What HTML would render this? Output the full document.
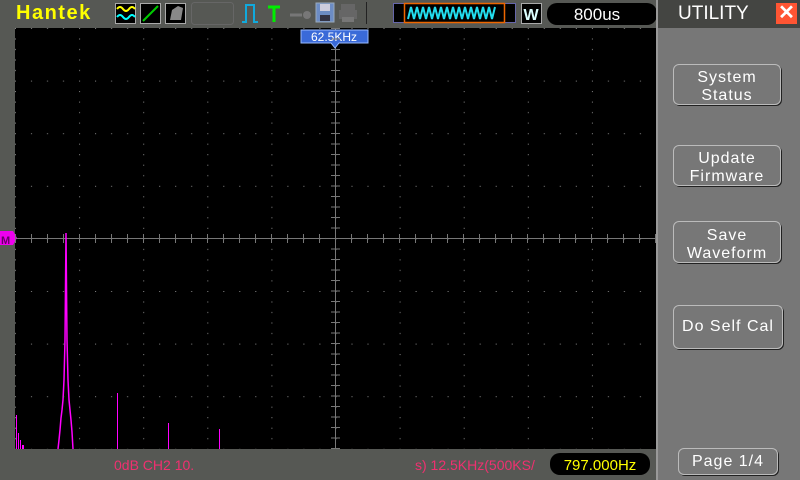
<!DOCTYPE html>
<html><head><style>
body{margin:0;width:800px;height:480px;overflow:hidden;background:#565854;font-family:"Liberation Sans",sans-serif;position:relative}
.a{position:absolute}
.btn{position:absolute;left:673px;width:108px;border:1px solid #bbb;border-radius:6px;color:#fff;font-size:16px;line-height:18px;text-align:center;box-shadow:1px 1px 0 #222;letter-spacing:1px}
</style></head><body>
<div class="a" style="left:0;top:0;width:656px;height:28px;background:#565854"></div>
<div class="a" style="left:16px;top:2px;color:#ffff00;font-size:20px;font-weight:bold;letter-spacing:1.5px">Hantek</div>
<svg class="a" style="left:0;top:0" width="656" height="28">
<rect x="115.5" y="3.5" width="20" height="20" fill="#000" stroke="#aaa"/>
<path d="M117 9 q3 -4 6 0 t6 0 t6 0" stroke="#ff0" fill="none" stroke-width="2"/>
<path d="M117 17 q3 -4 6 0 t6 0 t6 0" stroke="#0ff" fill="none" stroke-width="2"/>
<rect x="140.5" y="3.5" width="20" height="20" fill="#000" stroke="#aaa"/>
<path d="M143 21 L158 6" stroke="#0c0" stroke-width="2"/>
<rect x="165.5" y="3.5" width="20" height="20" fill="#000" stroke="#aaa"/>
<path d="M170 20 L172 10 L178 6 L183 8 L181 20 Z" fill="#888"/>
<rect x="191.5" y="2.5" width="42" height="22" rx="3" fill="none" stroke="#666"/>
<path d="M242 22 h4 v-17 h8 v17 h4" stroke="#1ad" fill="none" stroke-width="2"/>
<path d="M268 7 h12 M274 7 v15" stroke="#0e0" stroke-width="3"/>
<path d="M290 15 h12" stroke="#777" stroke-width="3"/><circle cx="307" cy="15" r="4" fill="#777"/>
<rect x="316" y="3" width="18" height="19" fill="#6c8cc4" stroke="#9ab"/><rect x="320" y="4" width="10" height="7" fill="#ccd"/><rect x="320" y="15" width="10" height="6" fill="#334"/>
<rect x="341" y="4" width="14" height="6" fill="#666"/><rect x="339" y="10" width="18" height="9" fill="#666"/><rect x="342" y="17" width="12" height="5" fill="#777"/>
<line x1="366.5" y1="2" x2="366.5" y2="24" stroke="#222"/>
<rect x="393.5" y="3.5" width="122" height="19" fill="#000" stroke="#66a"/>
<rect x="404.5" y="3.5" width="100" height="19" fill="none" stroke="#e60" stroke-width="1.5"/>
<path d="M408 19 l3 -12 l3 12 l3 -12 l3 12 l3 -12 l3 12 l3 -12 l3 12 l3 -12 l3 12 l3 -12 l3 12 l3 -12 l3 12 l3 -12 l3 12 l3 -12 l3 12 l3 -12 l3 12 l3 -12 l3 12 l3 -12 l3 12 l3 -12 l3 12 l3 -12 l3 12 l3 -12" stroke="#2de" fill="none" stroke-width="2"/>
<rect x="521.5" y="3.5" width="20" height="20" fill="#000" stroke="#aaa"/>
<text x="531" y="20" fill="#dff" font-size="16" font-weight="bold" text-anchor="middle" font-family="Liberation Sans">W</text>
<rect x="547" y="3" width="110" height="22" rx="10" fill="#000"/>
<text x="597" y="20" fill="#fff" font-size="17" text-anchor="middle" font-family="Liberation Sans">800us</text>
</svg>
<div class="a" style="left:656px;top:0;width:144px;height:480px;background:#777;border-left:2px solid #999;box-sizing:border-box"></div>
<div class="a" style="left:658px;top:0;width:142px;height:28px;background:#444542"></div>
<div class="a" style="left:678px;top:3px;color:#fff;font-size:19px">UTILITY</div>
<div class="a" style="left:776px;top:3px;width:21px;height:21px;background:#f53;color:#fff;font-size:20px;font-weight:bold;text-align:center;line-height:21px">✕</div>
<div class="btn" style="top:64px;height:41px;padding-top:4px;box-sizing:border-box">System<br>Status</div>
<div class="btn" style="top:145px;height:41px;padding-top:4px;box-sizing:border-box">Update<br>Firmware</div>
<div class="btn" style="top:221px;height:42px;padding-top:5px;box-sizing:border-box">Save<br>Waveform</div>
<div class="btn" style="top:305px;height:42px;line-height:42px">Do Self Cal</div>
<div class="btn" style="left:678px;width:98px;top:448px;height:25px;line-height:25px">Page 1/4</div>
<svg class="a" style="left:0;top:0" width="656" height="480">
<rect x="15" y="28" width="641" height="421" fill="#000"/>
<line x1="15" y1="238.5" x2="656" y2="238.5" stroke="#777"/>
<line x1="335.5" y1="28" x2="335.5" y2="449" stroke="#777"/>
<path d="M58 449 L59 440 L60 430 L61 418 L62 410 L63 400 L64 380 L65 340 L66 233 L67 340 L68 380 L69 400 L70 410 L71 420 L72 432 L73 449" stroke="#f0f" fill="none" stroke-width="1.5"/>
<g fill="#f0f"><rect x="117" y="393" width="1" height="56"/><rect x="168" y="423" width="1" height="26"/><rect x="219" y="429" width="1" height="20"/><rect x="16" y="415" width="1" height="34"/><rect x="18" y="433" width="1" height="16"/><rect x="20" y="440" width="1" height="9"/><rect x="22" y="445" width="2" height="4"/></g>
<path d="M0 231 h13 l4 7 l-4 7 h-13z" fill="#e0e"/>
<text x="1" y="244" fill="#606" font-size="11" font-weight="bold">M</text>
<path d="M301 30 h67 v13 h-29 l-4 5 l-4 -5 h-30z" fill="#3a6ad8" stroke="#9bf"/>
<text x="334" y="41" fill="#fff" font-size="12" text-anchor="middle" font-family="Liberation Sans">62.5KHz</text>
<text x="114" y="470" fill="#f03070" font-size="14" font-family="Liberation Sans">0dB  CH2 10.</text>
<text x="415" y="470" fill="#f03070" font-size="14" font-family="Liberation Sans">s) 12.5KHz(500KS/</text>
<rect x="550" y="453" width="100" height="22" rx="10" fill="#000"/>
<text x="600" y="470" fill="#ff0" font-size="15" text-anchor="middle" font-family="Liberation Sans">797.000Hz</text>
</svg>
<svg class="a" style="left:0;top:0" width="656" height="480">
<defs>
<pattern id="pd" x="15" y="28" width="64.1" height="52.6" patternUnits="userSpaceOnUse">
<rect x="16" y="0" width="1" height="1" fill="#888"/><rect x="32" y="0" width="1" height="1" fill="#888"/><rect x="48" y="0" width="1" height="1" fill="#888"/>
<rect x="0" y="10.5" width="1" height="1" fill="#888"/><rect x="0" y="21" width="1" height="1" fill="#888"/><rect x="0" y="31.5" width="1" height="1" fill="#888"/><rect x="0" y="42" width="1" height="1" fill="#888"/>
<rect x="0" y="0" width="1" height="1" fill="#888"/>
</pattern>
<pattern id="tx" x="15" y="0" width="16" height="480" patternUnits="userSpaceOnUse"><rect x="0" y="234" width="1" height="9" fill="#777"/></pattern>
<pattern id="ty" x="0" y="28" width="656" height="10.5" patternUnits="userSpaceOnUse"><rect x="331" y="0" width="9" height="1" fill="#777"/></pattern>
</defs>
<rect x="15" y="28" width="641" height="421" fill="url(#pd)"/>
<rect x="15" y="234" width="641" height="9" fill="url(#tx)"/>
<rect x="331" y="28" width="9" height="421" fill="url(#ty)"/>
</svg>
</body></html>
